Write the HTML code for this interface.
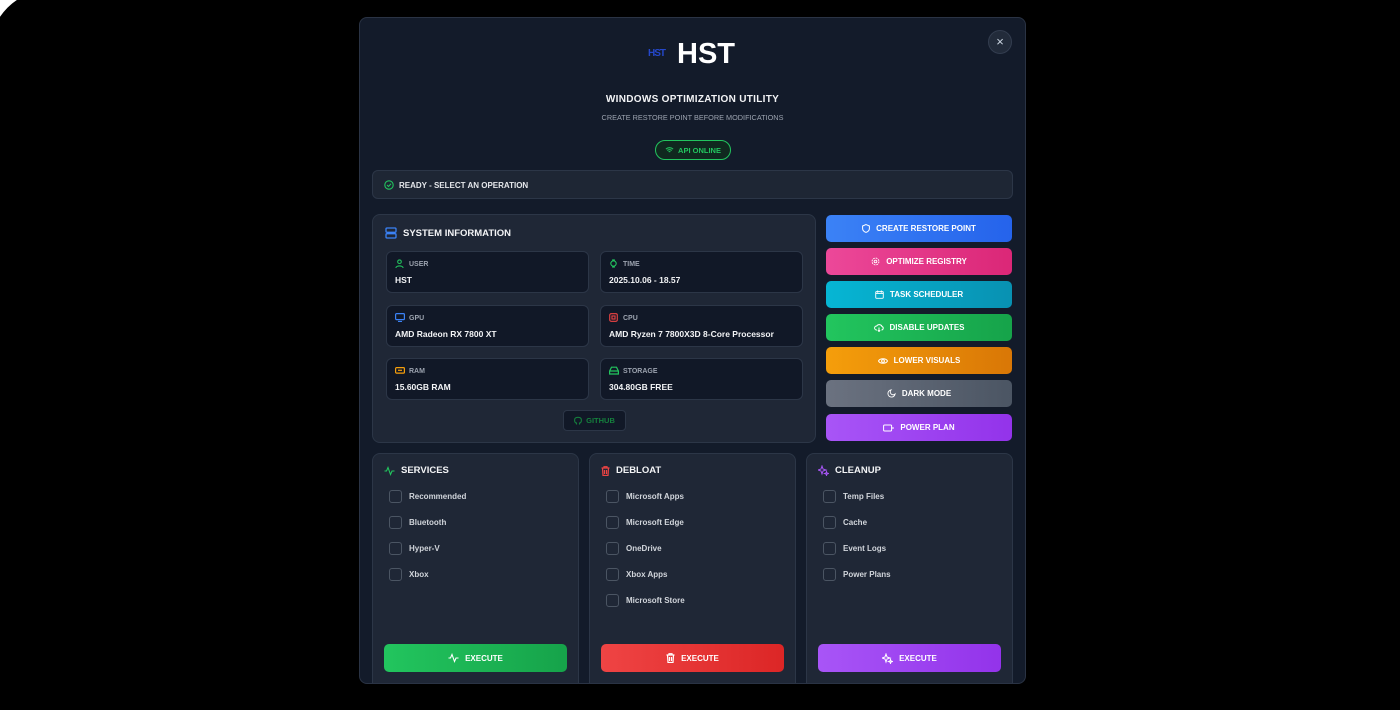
<!DOCTYPE html>
<html><head><style>
*{box-sizing:border-box;margin:0;padding:0}
body{width:1400px;height:700px;background:#fff;font-family:"Liberation Sans",sans-serif;position:relative;overflow:hidden;color:#e5e7eb}
.bg{position:absolute;left:-10px;top:-10px;width:1420px;height:720px;background:#000;border-top-left-radius:60px}
.modal{position:absolute;left:359px;top:17px;width:667px;height:667px;background:#131b2a;border:1px solid #2a3344;border-radius:8px;overflow:hidden}
.a{position:absolute}
.t{font-weight:bold;white-space:nowrap}
.panel{position:absolute;background:#1f2736;border:1px solid #2c3647;border-radius:8px}
.card{position:absolute;width:203px;height:42px;background:#111827;border:1px solid #2c3647;border-radius:6px}
.card .l{position:absolute;left:22px;top:9px;font-size:7px;font-weight:bold;color:#9ca3af}
.card .v{position:absolute;left:8px;top:23px;font-size:8.5px;font-weight:bold;color:#f3f4f6}
.card svg{position:absolute;left:8px;top:7px}
.btn{position:absolute;left:466px;width:186px;height:27px;border-radius:5px;font-size:8px;font-weight:bold;color:#fff;display:flex;align-items:center;justify-content:center;gap:6px}
.item{position:absolute;left:16px;font-size:8px;font-weight:bold;color:#d1d5db;display:flex;align-items:center;gap:7px}
.item i{display:inline-block;width:13px;height:13px;border:1px solid #4b5563;border-radius:3px}
.ex{position:absolute;left:11px;top:190px;width:183px;height:28px;border-radius:5px;font-size:8px;font-weight:bold;color:#fff;display:flex;align-items:center;justify-content:center;gap:6px}
.h{position:absolute;left:11px;top:11px;font-size:9.5px;font-weight:bold;color:#f3f4f6;display:flex;align-items:center;gap:6px}
</style></head><body>
<div class="bg"></div>
<div class="modal">
 <div class="a t" style="left:288px;top:30px;font-size:10px;color:#2547c9;letter-spacing:-1px">HST</div>
 <div class="a t" style="left:317px;top:20px;font-size:29px;color:#fff">HST</div>
 <div class="a" style="left:628px;top:12px;width:24px;height:24px;border-radius:50%;background:#222b3a;border:1px solid #333d4f;color:#cbd5e1;font-size:13px;text-align:center;line-height:22px">×</div>
 <div class="a t" style="left:0;width:665px;text-align:center;top:76px;font-size:10px;color:#f3f4f6;letter-spacing:.3px">WINDOWS OPTIMIZATION UTILITY</div>
 <div class="a" style="left:0;width:665px;text-align:center;top:95px;font-size:7.3px;color:#9ca3af">CREATE RESTORE POINT BEFORE MODIFICATIONS</div>
 <div class="a t" style="left:295px;top:122px;width:76px;height:20px;border:1px solid #22c55e;border-radius:10px;background:#10291f;color:#22c55e;font-size:7.5px;display:flex;align-items:center;justify-content:center;gap:4px"><svg width="9" height="8" viewBox="0 0 10 8" fill="none" stroke="#22c55e" stroke-width="1.2"><path d="M1 3a6 6 0 0 1 8 0M2.5 4.5a4 4 0 0 1 5 0M4 6a2 2 0 0 1 2 0"/></svg>API ONLINE</div>
 <div class="panel" style="left:12px;top:152px;width:641px;height:29px;background:#1e2634;border-radius:6px">
  <div class="a t" style="left:11px;top:9px;font-size:8px;color:#e5e7eb;display:flex;gap:5px;align-items:center"><svg width="10" height="10" viewBox="0 0 10 10" fill="none" stroke="#22c55e" stroke-width="1.1"><circle cx="5" cy="5" r="4.2"/><path d="M3 5l1.5 1.5L7 3.8"/></svg>READY - SELECT AN OPERATION</div>
 </div>
 <div class="panel" style="left:12px;top:196px;width:444px;height:229px">
  <div class="h" style="left:12px;top:12px"><svg width="12" height="12" viewBox="0 0 12 12" fill="none" stroke="#3b82f6" stroke-width="1.3"><rect x="1" y="1" width="10" height="4.3" rx="1"/><rect x="1" y="6.7" width="10" height="4.3" rx="1"/></svg>SYSTEM INFORMATION</div>
  <div class="card" style="left:13px;top:36px"><svg width="9" height="9" viewBox="0 0 10 10" fill="none" stroke="#22c55e" stroke-width="1.2"><circle cx="5" cy="3" r="2"/><path d="M1 10c0-3 8-3 8 0"/></svg><div class="l">USER</div><div class="v">HST</div></div>
  <div class="card" style="left:227px;top:36px"><svg width="9" height="9" viewBox="0 0 10 10" fill="none" stroke="#22c55e" stroke-width="1.2"><circle cx="5" cy="5" r="3"/><path d="M3.5 1h3M3.5 9h3"/></svg><div class="l">TIME</div><div class="v">2025.10.06 - 18.57</div></div>
  <div class="card" style="left:13px;top:90px"><svg width="10" height="9" viewBox="0 0 10 9" fill="none" stroke="#3b82f6" stroke-width="1.2"><rect x=".6" y=".6" width="8.8" height="6" rx="1"/><path d="M3 8.5h4"/></svg><div class="l">GPU</div><div class="v">AMD Radeon RX 7800 XT</div></div>
  <div class="card" style="left:227px;top:90px"><svg width="9" height="9" viewBox="0 0 10 10" fill="none" stroke="#ef4444" stroke-width="1.2"><rect x=".8" y=".8" width="8.4" height="8.4" rx="1.5"/><rect x="3.3" y="3.3" width="3.4" height="3.4"/></svg><div class="l">CPU</div><div class="v">AMD Ryzen 7 7800X3D 8-Core Processor</div></div>
  <div class="card" style="left:13px;top:143px"><svg width="10" height="9" viewBox="0 0 10 9" fill="none" stroke="#f59e0b" stroke-width="1.2"><rect x=".6" y="1.6" width="8.8" height="5.5" rx="1"/><path d="M3 4.3h4"/></svg><div class="l">RAM</div><div class="v">15.60GB RAM</div></div>
  <div class="card" style="left:227px;top:143px"><svg width="10" height="9" viewBox="0 0 10 9" fill="none" stroke="#22c55e" stroke-width="1.2"><path d="M.6 5L2.5 1.2h5L9.4 5v3H.6z M.6 5h8.8"/></svg><div class="l">STORAGE</div><div class="v">304.80GB FREE</div></div>
  <div class="a t" style="left:190px;top:195px;width:63px;height:21px;background:#111827;border:1px solid #2c3647;border-radius:4px;color:#15803d;font-size:7.5px;display:flex;align-items:center;justify-content:center;gap:4px"><svg width="8" height="9" viewBox="0 0 8 9" fill="none" stroke="#15803d" stroke-width="1.1"><path d="M2.5 8.5V7C1 7 .6 5.5.6 4 .6 2 2 1.3 4 1.3S7.4 2 7.4 4c0 1.5-.4 3-1.9 3v1.5"/></svg>GITHUB</div>
 </div>
 <div class="btn" style="top:197px;background:linear-gradient(90deg,#3b82f6,#2563eb)"><svg width="8" height="9" viewBox="0 0 8 9" fill="none" stroke="#fff" stroke-width="1"><path d="M4 .6L7.4 2v2.5C7.4 6.5 5.8 7.8 4 8.4 2.2 7.8.6 6.5.6 4.5V2z"/></svg>CREATE RESTORE POINT</div>
 <div class="btn" style="top:230px;background:linear-gradient(90deg,#ec4899,#db2777)"><svg width="9" height="9" viewBox="0 0 10 10" fill="none" stroke="#fff" stroke-width="1"><circle cx="5" cy="5" r="1.5"/><circle cx="5" cy="5" r="3.8" stroke-dasharray="2 1"/></svg>OPTIMIZE REGISTRY</div>
 <div class="btn" style="top:263px;background:linear-gradient(90deg,#06b6d4,#0891b2)"><svg width="9" height="9" viewBox="0 0 10 10" fill="none" stroke="#fff" stroke-width="1"><rect x=".8" y="1.8" width="8.4" height="7.4" rx="1"/><path d="M.8 4h8.4M3 .5v2.5M7 .5v2.5"/></svg>TASK SCHEDULER</div>
 <div class="btn" style="top:296px;background:linear-gradient(90deg,#22c55e,#16a34a)"><svg width="10" height="9" viewBox="0 0 10 9" fill="none" stroke="#fff" stroke-width="1"><path d="M3 7H2.5A2 2 0 0 1 2.7 3 3 3 0 0 1 8 3.5 1.8 1.8 0 0 1 7.5 7M5 4.5v4M3.8 7.3L5 8.5l1.2-1.2"/></svg>DISABLE UPDATES</div>
 <div class="btn" style="top:329px;background:linear-gradient(90deg,#f59e0b,#d97706)"><svg width="10" height="8" viewBox="0 0 10 8" fill="none" stroke="#fff" stroke-width="1"><path d="M.5 4C2 1 8 1 9.5 4 8 7 2 7 .5 4z"/><circle cx="5" cy="4" r="1.4"/></svg>LOWER VISUALS</div>
 <div class="btn" style="top:362px;background:linear-gradient(90deg,#6b7280,#4b5563)"><svg width="9" height="9" viewBox="0 0 10 10" fill="none" stroke="#fff" stroke-width="1"><path d="M4.5 1A4 4 0 1 0 9 5.5 3 3 0 0 1 4.5 1z"/></svg>DARK MODE</div>
 <div class="btn" style="top:396px;background:linear-gradient(90deg,#a855f7,#9333ea)"><svg width="11" height="8" viewBox="0 0 11 8" fill="none" stroke="#fff" stroke-width="1"><rect x=".6" y="1" width="8" height="6" rx="1"/><path d="M10 3v2"/></svg>POWER PLAN</div>

 <div class="panel" style="left:12px;top:435px;width:207px;height:240px">
  <div class="h"><svg width="11" height="10" viewBox="0 0 11 10" fill="none" stroke="#22c55e" stroke-width="1.1"><path d="M.5 5h2L4 1.5 6.5 8.5 8 5h2.5"/></svg>SERVICES</div>
  <div class="item" style="top:36px"><i></i>Recommended</div>
  <div class="item" style="top:62px"><i></i>Bluetooth</div>
  <div class="item" style="top:88px"><i></i>Hyper-V</div>
  <div class="item" style="top:114px"><i></i>Xbox</div>
  <div class="ex" style="background:linear-gradient(90deg,#22c55e,#16a34a)"><svg width="11" height="10" viewBox="0 0 11 10" fill="none" stroke="#fff" stroke-width="1.1"><path d="M.5 5h2L4 1.5 6.5 8.5 8 5h2.5"/></svg>EXECUTE</div>
 </div>
 <div class="panel" style="left:229px;top:435px;width:207px;height:240px">
  <div class="h"><svg width="9" height="10" viewBox="0 0 9 10" fill="none" stroke="#ef4444" stroke-width="1.2"><path d="M.5 2h8M3 2V.7h3V2M1.5 2l.5 7.5h5L7.5 2M3.5 4v4M5.5 4v4"/></svg>DEBLOAT</div>
  <div class="item" style="top:36px"><i></i>Microsoft Apps</div>
  <div class="item" style="top:62px"><i></i>Microsoft Edge</div>
  <div class="item" style="top:88px"><i></i>OneDrive</div>
  <div class="item" style="top:114px"><i></i>Xbox Apps</div>
  <div class="item" style="top:140px"><i></i>Microsoft Store</div>
  <div class="ex" style="background:linear-gradient(90deg,#ef4444,#dc2626)"><svg width="9" height="10" viewBox="0 0 9 10" fill="none" stroke="#fff" stroke-width="1.2"><path d="M.5 2h8M3 2V.7h3V2M1.5 2l.5 7.5h5L7.5 2M3.5 4v4M5.5 4v4"/></svg>EXECUTE</div>
 </div>
 <div class="panel" style="left:446px;top:435px;width:207px;height:240px">
  <div class="h"><svg width="11" height="11" viewBox="0 0 11 11" fill="none" stroke="#a855f7" stroke-width="1"><path d="M4 1l1 3 3 1-3 1-1 3-1-3-3-1 3-1zM8.5 6.5l.5 1.5 1.5.5-1.5.5-.5 1.5-.5-1.5-1.5-.5 1.5-.5z"/></svg>CLEANUP</div>
  <div class="item" style="top:36px"><i></i>Temp Files</div>
  <div class="item" style="top:62px"><i></i>Cache</div>
  <div class="item" style="top:88px"><i></i>Event Logs</div>
  <div class="item" style="top:114px"><i></i>Power Plans</div>
  <div class="ex" style="background:linear-gradient(90deg,#a855f7,#9333ea)"><svg width="11" height="11" viewBox="0 0 11 11" fill="none" stroke="#fff" stroke-width="1"><path d="M4 1l1 3 3 1-3 1-1 3-1-3-3-1 3-1zM8.5 6.5l.5 1.5 1.5.5-1.5.5-.5 1.5-.5-1.5-1.5-.5 1.5-.5z"/></svg>EXECUTE</div>
 </div>
</div>
</body></html>
